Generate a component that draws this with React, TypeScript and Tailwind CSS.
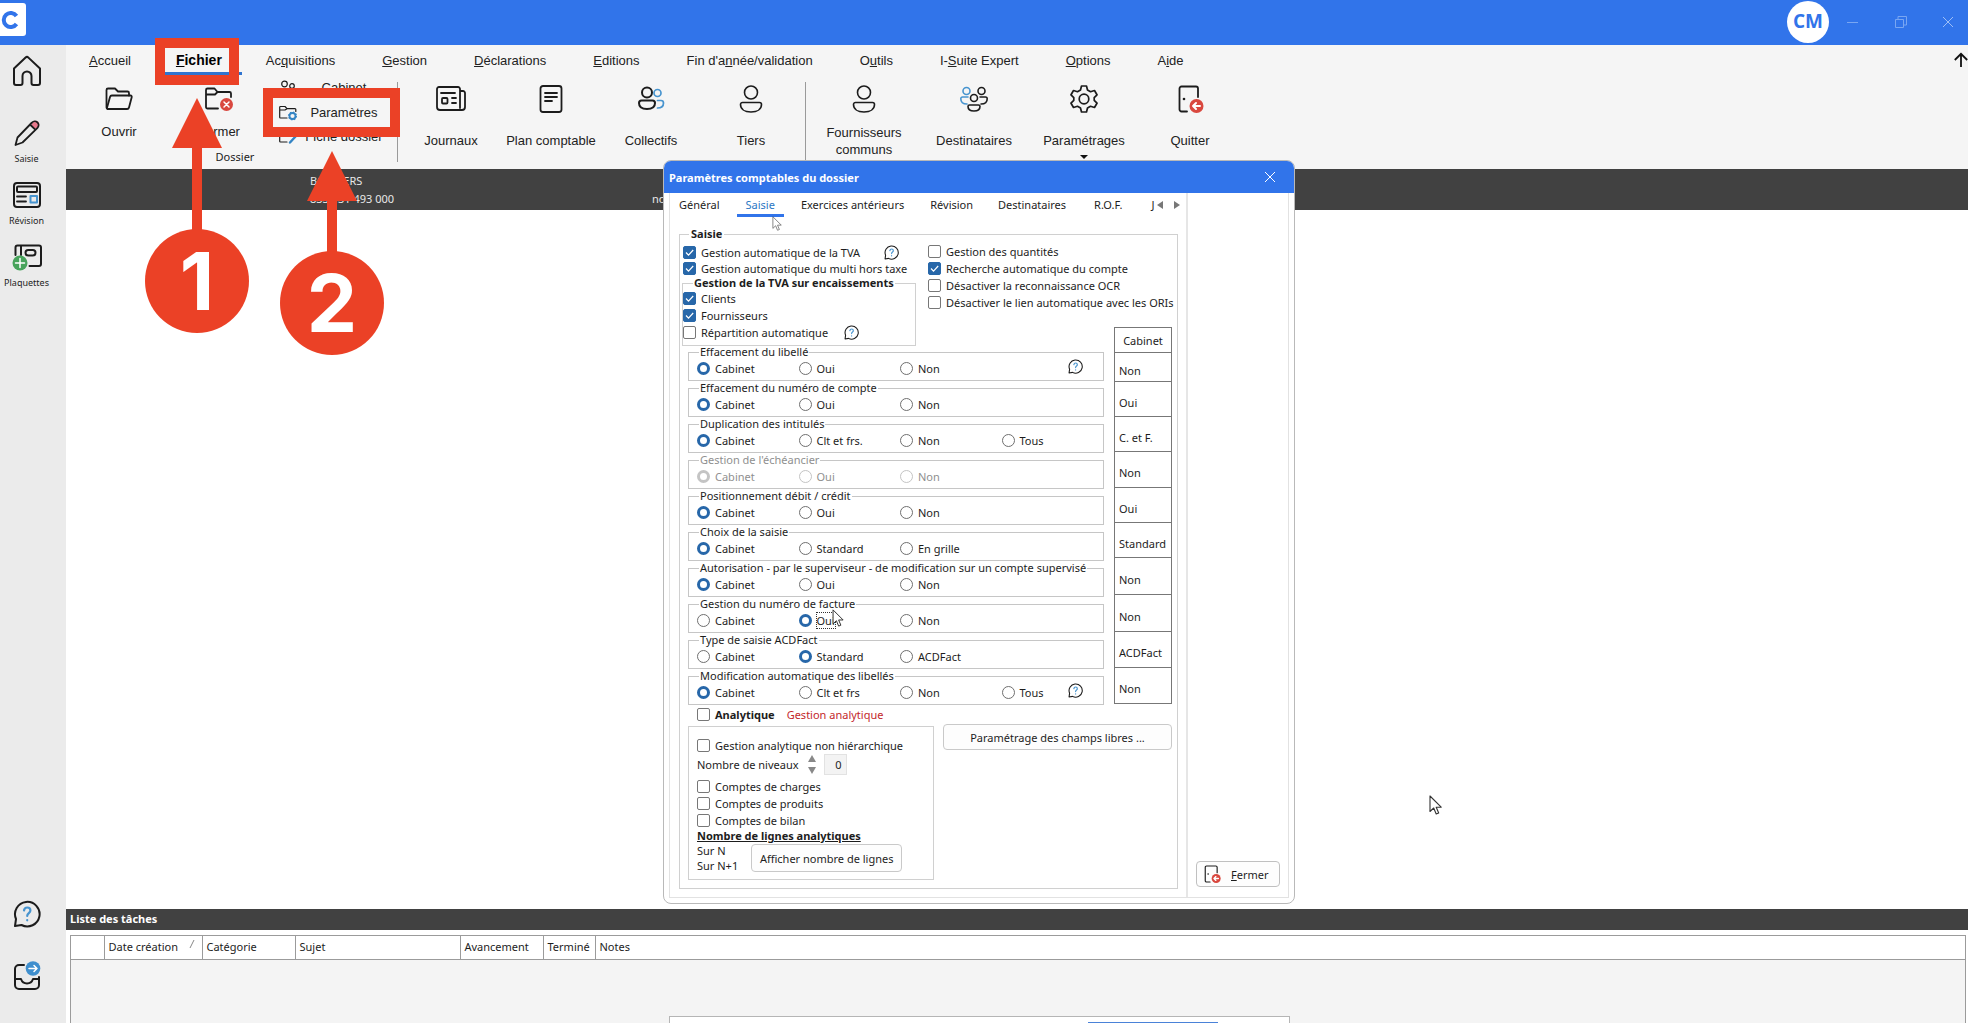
import type { ReactNode } from 'react';

const svgBase = {
  fill: 'none',
  stroke: '#1c1c1c',
  strokeWidth: 2,
  strokeLinecap: 'round' as const,
  strokeLinejoin: 'round' as const,
};

function HomeIcon() {
  return (
    <svg {...svgBase} className="h-8 w-8" viewBox="0 0 32 32">
      <path d="M3 13.500 14.600 2.600a2 2 0 0 1 2.800 0L29 13.500V28a2 2 0 0 1-2 2h-4.500a2 2 0 0 1-2-2v-7a4.500 4.500 0 0 0-9 0v7a2 2 0 0 1-2 2H5a2 2 0 0 1-2-2z" />
    </svg>
  );
}

function PencilIcon() {
  return (
    <svg {...svgBase} className="h-7 w-7" viewBox="0 0 28 28">
      <circle cx="22.500" cy="5.500" r="3.800" fill="#e8798c" stroke="none" />
      <path d="M19 3.500a3.800 3.800 0 0 1 5.500 5.300L9.500 23.500 2.500 26l2-7.500zM17 5.500l5.500 5.300" strokeWidth={1.800} />
    </svg>
  );
}

function RevisionIcon() {
  return (
    <svg {...svgBase} className="h-7 w-7" viewBox="0 0 28 28">
      <rect x="1" y="2" width="26" height="24" rx="3" />
      <rect x="4" y="5.500" width="20" height="5.500" rx="1" />
      <path d="M4 15.500h9M4 20.500h9" strokeWidth={1.800} />
      <rect x="17.500" y="15" width="6.500" height="6.500" stroke="#4794cf" />
    </svg>
  );
}

function PlaquettesIcon() {
  return (
    <svg {...svgBase} className="h-7 w-8" viewBox="0 0 32 28">
      <path d="M4.500 12V4.500a2 2 0 0 1 2-2H28a2 2 0 0 1 2 2V21a2 2 0 0 1-2 2H18.500M10 3v9" />
      <rect x="14.500" y="7" width="10" height="5.500" rx="2.700" />
      <circle cx="9" cy="20" r="7.500" fill="#47a35b" stroke="none" />
      <path d="M9 15.500v9M4.500 20h9" stroke="#fff" strokeWidth={1.500} />
    </svg>
  );
}

function HelpBubble({ className }: { className: string }) {
  return (
    <svg {...svgBase} className={className} viewBox="0 0 28 28">
      <path d="M2 26 3 19A12.300 12.300 0 1 1 8.500 25z" />
      <path d="M11 10.500c.3-2 1.500-3 3.200-3 2 0 3.200 1.200 3.200 3 0 2.500-3.200 2.800-3.200 5.500M14.200 20v.300" stroke="#4794cf" strokeWidth={2.200} />
    </svg>
  );
}

function InboxIcon() {
  return (
    <svg {...svgBase} className="h-[30px] w-7" viewBox="0 0 28 30">
      <path d="M11 4H6a4 4 0 0 0-4 4v16a4 4 0 0 0 4 4h16a4 4 0 0 0 4-4v-8" />
      <path d="M2 18h6c1 3 2.800 4.500 6 4.500s5-1.500 6-4.500h6" />
      <circle cx="20" cy="7.500" r="7.300" fill="#3f8fce" stroke="none" />
      <path d="M16 7.500h8M21 4.500l3 3-3 3" stroke="#fff" strokeWidth={1.500} />
    </svg>
  );
}

function FolderOpenIcon() {
  return (
    <svg {...svgBase} strokeWidth={1.800} className="h-7 w-7" viewBox="0 0 28 28">
      <path d="M1.500 22.500V5a1.500 1.500 0 0 1 1.500-1.500h7l3 3h9.500A1.500 1.500 0 0 1 24 8v2.500" />
      <path d="M1.800 23.500 5 12a2 2 0 0 1 2-1.500h18.500a1.300 1.300 0 0 1 1.200 1.700L24 22.500a2 2 0 0 1-2 1.500H2.500z" />
    </svg>
  );
}

function FolderCloseIcon() {
  return (
    <svg {...svgBase} strokeWidth={1.800} className="h-7 w-7" viewBox="0 0 28 28">
      <path d="M13 23.500H2.500a1.500 1.500 0 0 1-1.500-1.500V5a1.500 1.500 0 0 1 1.500-1.500h7l3 3.500h12a1.500 1.500 0 0 1 1.500 1.500V12M1 9.500h9l2.500-2.500" />
      <circle cx="21.500" cy="19.500" r="6.500" fill="#d9483f" stroke="none" />
      <path d="m19 17 5 5m0-5-5 5" stroke="#fff" strokeWidth={1.500} />
    </svg>
  );
}

function JournalIcon() {
  return (
    <svg {...svgBase} strokeWidth={1.800} className="h-7 w-[30px]" viewBox="0 0 30 28">
      <path d="M24 23V4a2 2 0 0 0-2-2H3a2 2 0 0 0-2 2v18a3 3 0 0 0 3 3h22a3 3 0 0 0 3-3V8a2 2 0 0 0-2-2h-2.500" />
      <path d="M5 8h14M16 13h4M16 18h4" />
      <rect x="6" y="13" width="5.500" height="5.500" rx="1" />
    </svg>
  );
}

function PlanIcon() {
  return (
    <svg {...svgBase} strokeWidth={1.800} className="h-7 w-7" viewBox="0 0 28 28">
      <rect x="3.500" y="1" width="21" height="26" rx="2.500" />
      <path d="M8 8h12M8 12h12M8 16h7" />
    </svg>
  );
}

function CollectifsIcon() {
  return (
    <svg {...svgBase} className="h-7 w-7" viewBox="0 0 28 28">
      <circle cx="10" cy="7.500" r="5" />
      <path d="M4.500 15.500h11a2.500 2.500 0 0 1 2.500 2.500c0 4-3 6-8 6s-8-2-8-6a2.500 2.500 0 0 1 2.500-2.500z" />
      <g stroke="#4794cf" strokeWidth={1.700}>
        <circle cx="20.500" cy="8" r="3.500" />
        <path d="M20.500 15.500H24a2.500 2.500 0 0 1 2.500 2.500c0 3-2 5-6 5" />
      </g>
    </svg>
  );
}

function PersonIcon() {
  return (
    <svg {...svgBase} strokeWidth={1.600} className="h-7 w-7" viewBox="0 0 28 28">
      <circle cx="14" cy="7.500" r="6.500" />
      <path d="M5.500 17.500h17a2 2 0 0 1 2 2c0 4.500-4 7.500-10.500 7.500S3.500 24 3.500 19.500a2 2 0 0 1 2-2z" />
    </svg>
  );
}

function DestinatairesIcon() {
  return (
    <svg {...svgBase} strokeWidth={1.600} className="h-7 w-7" viewBox="0 0 28 28">
      <g stroke="#4794cf">
        <circle cx="6.500" cy="6" r="3.500" />
        <path d="M8 12H2.500A1.700 1.700 0 0 0 .8 13.700c0 3 1.700 5.300 6.200 5.300" />
      </g>
      <circle cx="21.500" cy="6" r="3.500" />
      <path d="M20 12h5.500a1.700 1.700 0 0 1 1.700 1.700c0 3-1.700 5.300-6.200 5.300" />
      <circle cx="14" cy="13" r="3.500" />
      <path d="M9.500 20h9a1.500 1.500 0 0 1 1.500 1.500c0 3-2 4.500-6 4.500s-6-1.500-6-4.500A1.500 1.500 0 0 1 9.500 20z" />
    </svg>
  );
}

function GearIcon() {
  return (
    <svg {...svgBase} strokeWidth={1.700} className="h-7 w-7" viewBox="0 0 28 28">
      <path d="M11.500 1h5l1 4 3 1.700 4-1.200L27 9.800l-2.800 2.900v2.600l2.800 2.900-2.500 4.300-4-1.200-3 1.700-1 4h-5l-1-4-3-1.700-4 1.200L1 18.200l2.800-2.900v-2.600L1 9.800l2.500-4.300 4 1.200 3-1.700z" />
      <circle cx="14" cy="14" r="4.800" />
    </svg>
  );
}

function DoorIcon({ className }: { className: string }) {
  return (
    <svg {...svgBase} strokeWidth={1.800} className={className} viewBox="0 0 28 28">
      <path d="M11 26.500H5.500a2 2 0 0 1-2-2v-21a2 2 0 0 1 2-2H20a2 2 0 0 1 2 2V12" />
      <circle cx="8" cy="14" r="1.300" fill="#1c1c1c" stroke="none" />
      <circle cx="20.500" cy="21" r="7" fill="#d9483f" stroke="none" />
      <path d="M24 21h-7m3-3-3 3 3 3" stroke="#fff" strokeWidth={2} />
    </svg>
  );
}

function CabinetIcon() {
  return (
    <svg {...svgBase} strokeWidth={1.200} className="h-4 w-[18px]" viewBox="0 0 18 16">
      <circle cx="5.500" cy="4" r="2.800" />
      <circle cx="13" cy="6" r="2.300" />
      <path d="M1 14c0-4 10-4 10 0M13 12c2 0 3 .5 4 2" />
    </svg>
  );
}

function FolderGearIcon() {
  return (
    <svg {...svgBase} strokeWidth={1.200} className="h-4 w-[18px]" viewBox="0 0 18 16">
      <path d="M8 13H1.500a.8.8 0 0 1-.8-.8V2.300a.8.8 0 0 1 .8-.8H6l2 2.200h8a.8.8 0 0 1 .8.800v2M.7 5H6l2-1.300" />
      <circle cx="13.500" cy="11" r="3" stroke="#3384c4" strokeWidth={1.800} />
      <circle cx="13.500" cy="11" r="3.900" stroke="#3384c4" strokeWidth={1.200} strokeDasharray="1.500 1.560" strokeLinecap="butt" />
    </svg>
  );
}

function FolderPenIcon() {
  return (
    <svg {...svgBase} strokeWidth={1.200} className="h-4 w-[18px]" viewBox="0 0 18 16">
      <path d="M8 13H1.500a.8.8 0 0 1-.8-.8V2.300a.8.8 0 0 1 .8-.8H6l2 2.200h8a.8.8 0 0 1 .8.800v1M.7 5H6l2-1.300" />
      <path d="m11 13.500 5.500-6" stroke="#3384c4" strokeWidth={2.400} />
    </svg>
  );
}

function PointerIcon({ className }: { className: string }) {
  return (
    <svg className={className} viewBox="0 0 13 20" fill="#fff" stroke="#333" strokeWidth={1.100} strokeLinejoin="round">
      <path d="M1 1v15.500l3.700-3.500 2.500 6 2.500-1-2.500-5.800h5z" />
    </svg>
  );
}

function SideButton({ icon, label }: { icon: ReactNode; label?: string }) {
  return (
    <button className="flex h-[62px] w-full flex-col items-center pr-[13px]" aria-label={label ?? 'Navigation'}>
      <span className="flex h-9 items-center justify-center">{icon}</span>
      {label && <span className="h-4 text-[9px] leading-4">{label}</span>}
    </button>
  );
}

const menuItems: [string, string, string][] = [
  ['', 'A', 'ccueil'],
  ['', 'F', 'ichier'],
  ['Ac', 'q', 'uisitions'],
  ['', 'G', 'estion'],
  ['', 'D', 'éclarations'],
  ['', 'E', 'ditions'],
  ["Fin d'a", 'n', 'née/validation'],
  ['O', 'u', 'tils'],
  ['I-', 'S', 'uite Expert'],
  ['', 'O', 'ptions'],
  ['A', 'i', 'de'],
];

function RibbonButton({ icon, label, width, menu }: { icon: ReactNode; label: string; width: string; menu?: boolean }) {
  return (
    <button className={`flex flex-col items-center pt-[10px] ${width}`}>
      <span className="flex h-7 items-center">{icon}</span>
      <span className="mt-[10px] flex h-[35px] items-center leading-[17px]">{label}</span>
      {menu && (
        <svg className="-mt-[3px] h-1 w-2" viewBox="0 0 8 4">
          <path d="M0 0h8L4 4z" fill="#111" />
        </svg>
      )}
    </button>
  );
}

function Separator() {
  return <div className="mt-[7px] h-20 w-px shrink-0 bg-[#9a9a9a]" />;
}

type CheckBoxProps = { label: string; checked?: boolean; bold?: boolean; tight?: boolean; children?: ReactNode };

function CheckBox({ label, checked, bold, tight, children }: CheckBoxProps) {
  return (
    <div className={`flex items-center ${tight ? 'h-4' : 'h-[17px]'}`}>
      <label className="flex items-center gap-[5px] whitespace-nowrap">
        <span className="relative flex h-[13px] w-[13px]">
          <input
            type="checkbox"
            defaultChecked={checked}
            className="peer h-[13px] w-[13px] appearance-none rounded-[2px] border border-[#777] bg-white checked:border-[#2767a9] checked:bg-[#2767a9]"
          />
          <svg className="pointer-events-none absolute inset-0 hidden peer-checked:block" viewBox="0 0 13 13" fill="none" stroke="#fff" strokeWidth={1.200}>
            <path d="m3 6.500 2.500 2.700L10.200 4" />
          </svg>
        </span>
        <span className={bold ? 'font-bold' : ''}>{label}</span>
      </label>
      {children}
    </div>
  );
}

type Group = { title: string; options: string[]; selected: number; disabled?: boolean; help?: boolean; focus?: boolean };

const groups: Group[] = [
  { title: 'Effacement du libellé', options: ['Cabinet', 'Oui', 'Non'], selected: 0, help: true },
  { title: 'Effacement du numéro de compte', options: ['Cabinet', 'Oui', 'Non'], selected: 0 },
  { title: 'Duplication des intitulés', options: ['Cabinet', 'Clt et frs.', 'Non', 'Tous'], selected: 0 },
  { title: "Gestion de l'échéancier", options: ['Cabinet', 'Oui', 'Non'], selected: 0, disabled: true },
  { title: 'Positionnement débit / crédit', options: ['Cabinet', 'Oui', 'Non'], selected: 0 },
  { title: 'Choix de la saisie', options: ['Cabinet', 'Standard', 'En grille'], selected: 0 },
  { title: 'Autorisation - par le superviseur - de modification sur un compte supervisé', options: ['Cabinet', 'Oui', 'Non'], selected: 0 },
  { title: 'Gestion du numéro de facture', options: ['Cabinet', 'Oui', 'Non'], selected: 1, focus: true },
  { title: 'Type de saisie ACDFact', options: ['Cabinet', 'Standard', 'ACDFact'], selected: 1 },
  { title: 'Modification automatique des libellés', options: ['Cabinet', 'Clt et frs', 'Non', 'Tous'], selected: 0, help: true },
];

function RadioGroup({ group }: { group: Group }) {
  return (
    <fieldset disabled={group.disabled} className={`h-9 border border-[#c6c6c6] pl-2 ${group.disabled ? 'text-[#8f8f8f]' : ''}`}>
      <legend className="ml-[2px] px-px leading-[14px]">{group.title}</legend>
      <div className="relative grid h-[19px] grid-cols-4 items-center">
        {group.options.map((option, i) => (
          <label key={option} className="flex items-center gap-[5px] whitespace-nowrap">
            <input
              type="radio"
              name={group.title}
              defaultChecked={i === group.selected}
              className="h-[13px] w-[13px] appearance-none rounded-full border border-[#6f6f6f] bg-white checked:border-[3px] checked:border-[#2767a9] disabled:border-[#c4c4c4]"
            />
            <span className={group.focus && i === group.selected ? 'relative outline-1 outline-dotted outline-[#333]' : ''}>
              {option}
              {group.focus && i === group.selected && <PointerIcon className="absolute -top-1 left-[15px] h-[18px] w-3" />}
            </span>
          </label>
        ))}
        {group.help && <HelpBubble className="absolute right-5 top-0 h-[15px] w-[15px]" />}
      </div>
    </fieldset>
  );
}

const cabinetRows: [string, string][] = [
  ['Non', 'h-[29px]'],
  ['Oui', 'h-[35px]'],
  ['C. et F.', 'h-[35px]'],
  ['Non', 'h-[36px]'],
  ['Oui', 'h-[35px]'],
  ['Standard', 'h-[35px]'],
  ['Non', 'h-[37px]'],
  ['Non', 'h-[37px]'],
  ['ACDFact', 'h-[36px]'],
  ['Non', 'h-[36px]'],
];

const dialogTabs: [string, string][] = [
  ['Général', 'pr-[10px]'],
  ['Saisie', 'px-[9px]'],
  ['Exercices antérieurs', 'px-[10px]'],
  ['Révision', 'px-[9px]'],
  ['Destinataires', 'px-[9px]'],
  ['R.O.F.', 'px-[12px]'],
  ['J', 'pl-[10px]'],
];

function ParametersDialog() {
  return (
    <section
      role="dialog"
      aria-label="Paramètres comptables du dossier"
      className="absolute left-[663px] top-[160px] w-[632px] overflow-hidden rounded-lg border border-[#b9b9b9] bg-white text-[11px] leading-[15px] text-[#1d1d1d]"
    >
      <header className="flex h-8 items-center justify-between bg-[#3174ea] pl-[5px] pr-[18px] text-white">
        <h2 className="font-bold">Paramètres comptables du dossier</h2>
        <button aria-label="Fermer la fenêtre">
          <svg className="h-3 w-3" viewBox="0 0 12 12" stroke="#fff">
            <path d="m1 1 10 10M11 1 1 11" />
          </svg>
        </button>
      </header>
      <div className="mx-[5px] mb-[5px] flex border-x border-b border-[#e2e2e2]">
        <div className="w-[518px] border-r-2 border-[#e6e6e6] pb-2 pl-[9px] pr-2">
          <div className="flex h-[34px] items-start pt-[2px]">
            <div role="tablist" className="flex flex-1 gap-[7px]">
              {dialogTabs.map(([tab, padding], i) => (
                <button
                  key={tab}
                  role="tab"
                  className={`h-[22px] border-b-[3px] ${padding} ${i === 1 ? 'border-[#3174ea] text-[#2c77c4]' : 'border-transparent'}`}
                >
                  {tab}
                </button>
              ))}
            </div>
            <div className="-mr-[2px] flex gap-[11px] pt-[6px]">
              <button aria-label="Onglets précédents">
                <svg className="h-2 w-1.5" viewBox="0 0 6 8"><path d="M6 0v8L0 4z" fill="#777" /></svg>
              </button>
              <button aria-label="Onglets suivants">
                <svg className="h-2 w-1.5" viewBox="0 0 6 8"><path d="M0 0v8l6-4z" fill="#777" /></svg>
              </button>
            </div>
          </div>
          <fieldset className="border border-[#d0d0d0] pb-2 pl-[2px]">
            <legend className="ml-[7px] px-[2px] font-bold leading-[14px]">Saisie</legend>
            <div className="grid grid-cols-[246px_182px_1fr] grid-rows-[86px_18px_auto]">
              <div className="row-span-2 pl-px pt-[3px]">
                <CheckBox label="Gestion automatique de la TVA" checked tight>
                  <HelpBubble className="ml-6 h-[15px] w-[15px]" />
                </CheckBox>
                <CheckBox label="Gestion automatique du multi hors taxe" checked tight />
                <fieldset className="-ml-px w-[234px] border border-[#d0d0d0] pb-1">
                  <legend className="ml-[10px] px-px font-bold leading-[14px]">Gestion de la TVA sur encaissements</legend>
                  <CheckBox label="Clients" checked />
                  <CheckBox label="Fournisseurs" checked />
                  <CheckBox label="Répartition automatique">
                    <HelpBubble className="ml-4 h-[15px] w-[15px]" />
                  </CheckBox>
                </fieldset>
              </div>
              <div className="col-span-2 pt-[2px]">
                <CheckBox label="Gestion des quantités" />
                <CheckBox label="Recherche automatique du compte" checked />
                <CheckBox label="Désactiver la reconnaissance OCR" />
                <CheckBox label="Désactiver le lien automatique avec les ORIs" />
              </div>
              <div className="col-span-2 col-start-1 row-start-3 px-[6px]">
                {groups.map((group) => (
                  <RadioGroup key={group.title} group={group} />
                ))}
              </div>
              <table className="col-start-3 row-span-2 row-start-2 ml-1 w-[58px] border-collapse self-start">
                <thead>
                  <tr className="h-[25px]">
                    <th scope="col" className="border border-[#777] font-normal">Cabinet</th>
                  </tr>
                </thead>
                <tbody>
                  {cabinetRows.map(([value, height], i) => (
                    <tr key={i} className={height}>
                      <td className="border border-[#777] pl-1 pt-[6px]">{value}</td>
                    </tr>
                  ))}
                </tbody>
              </table>
            </div>
            <div className="flex h-[19px] items-center gap-3 pl-[15px]">
              <CheckBox label="Analytique" bold />
              <span className="text-[#c3272b]">Gestion analytique</span>
            </div>
            <div className="flex items-start gap-[9px] pl-[6px] pr-[5px]">
              <div className="mt-[2px] w-[246px] border border-[#d0d0d0] pb-[6px] pl-2 pt-[10px]">
                <CheckBox label="Gestion analytique non hiérarchique" />
                <div className="mb-1 flex h-5 items-center">
                  <label htmlFor="levels">Nombre de niveaux</label>
                  <span className="ml-[9px] flex flex-col gap-[5px]">
                    <button aria-label="Augmenter"><svg className="h-[7px] w-2" viewBox="0 0 8 7"><path d="M0 7h8L4 0z" fill="#888" /></svg></button>
                    <button aria-label="Diminuer"><svg className="h-[7px] w-2" viewBox="0 0 8 7"><path d="M0 0h8L4 7z" fill="#888" /></svg></button>
                  </span>
                  <input id="levels" defaultValue="0" className="ml-2 h-[21px] w-[23px] border border-[#e2e2e2] bg-[#f3f3f3] pr-1 text-right" />
                </div>
                <CheckBox label="Comptes de charges" />
                <CheckBox label="Comptes de produits" />
                <CheckBox label="Comptes de bilan" />
                <p className="font-bold leading-[14px] underline">Nombre de lignes analytiques</p>
                <div className="flex items-center gap-[13px]">
                  <div>
                    <p>Sur N</p>
                    <p>Sur N+1</p>
                  </div>
                  <button className="h-7 w-[151px] rounded border border-[#c9c9c9] bg-[#fdfdfd]">Afficher nombre de lignes</button>
                </div>
              </div>
              <button className="h-[26px] flex-1 rounded border border-[#c9c9c9] bg-[#fdfdfd]">Paramétrage des champs libres ...</button>
            </div>
          </fieldset>
        </div>
        <div className="flex flex-1 flex-col items-end justify-end pb-[10px] pr-2">
          <button className="flex h-[26px] w-[84px] items-center gap-[10px] rounded border border-[#c0c0c0] bg-[#fdfdfd] pl-[6px]">
            <DoorIcon className="h-[18px] w-[18px]" />
            <span><u>F</u>ermer</span>
          </button>
        </div>
      </div>
    </section>
  );
}

const taskColumns: [string, string][] = [
  ['', 'w-[33px]'],
  ['Date création', 'w-[98px]'],
  ['Catégorie', 'w-[93px]'],
  ['Sujet', 'w-[165px]'],
  ['Avancement', 'w-[83px]'],
  ['Terminé', 'w-[52px]'],
  ['Notes', ''],
];

function TaskPanel() {
  return (
    <section className="flex h-[114px] flex-col text-[11px] text-[#1d1d1d]">
      <h2 className="flex h-[21px] items-center bg-[#414141] pl-[4px] font-bold text-white">Liste des tâches</h2>
      <div className="ml-1 mr-[2px] mt-[5px] flex-1 border border-b-0 border-[#9b9b9b] bg-[#f4f4f4]">
        <table className="w-full table-fixed">
          <thead>
            <tr className="h-[23px] border-b border-[#9b9b9b] bg-white text-left">
              {taskColumns.map(([label, width], i) => (
                <th key={i} scope="col" className={`font-normal ${width} ${i < 6 ? 'border-r border-[#9b9b9b]' : ''} ${i === 0 ? '' : 'pl-1'}`}>
                  {i === 1 ? (
                    <span className="flex justify-between pr-[7px]">
                      {label}
                      <svg className="h-3 w-1.5" viewBox="0 0 6 12" stroke="#888"><path d="M1 9 5 1" /></svg>
                    </span>
                  ) : (
                    label
                  )}
                </th>
              ))}
            </tr>
          </thead>
        </table>
      </div>
    </section>
  );
}

function Callout({ digit, position, shaft }: { digit: string; position: string; shaft: string }) {
  return (
    <div className={`pointer-events-none absolute flex w-[104px] flex-col items-center ${position}`}>
      <svg className="h-[50px] w-[50px]" viewBox="0 0 50 50">
        <path d="M25 0 50 50H0z" fill="#eb4126" />
      </svg>
      <div className={`-mt-px w-[10px] bg-[#eb4126] ${shaft}`} />
      <div className="-mt-0.5 flex h-[104px] w-[104px] items-center justify-center rounded-full bg-[#eb4126] text-[80px] font-bold leading-none text-white">
        {digit}
      </div>
    </div>
  );
}

export default function App() {
  return (
    <div className="relative flex h-screen flex-col overflow-hidden bg-white font-['Noto_Sans',sans-serif] text-[#1d1d1d]">
      <header className="flex h-[45px] shrink-0 items-start justify-between bg-[#3174ea]">
        <div className="mt-[3px] flex h-[33px] w-[26px] items-center rounded-r-[3px] bg-white">
          <svg className="h-[18px] w-[19px]" viewBox="0 0 19 18" fill="none" stroke="#3174ea" strokeWidth={4}>
            <path d="M16.500 5A7 7 0 1 0 16.500 13" />
          </svg>
        </div>
        <div className="flex h-[43px] items-center">
          <span className="mr-[18px] flex h-[42px] w-[42px] items-center justify-center rounded-full bg-white font-['Open_Sans',sans-serif] text-[19px] font-bold text-[#3174ea]">CM</span>
          <button aria-label="Réduire" className="mr-[36px]"><svg className="h-3 w-3" viewBox="0 0 12 12" stroke="#79a6f2"><path d="M0 6.500h11" /></svg></button>
          <button aria-label="Restaurer" className="mr-[35px]"><svg className="h-3 w-3" viewBox="0 0 12 12" fill="none" stroke="#79a6f2"><path d="M.5 3.500h8v8h-8zM3 3V.5h8.500V9H9" /></svg></button>
          <button aria-label="Fermer" className="mr-[14px]"><svg className="h-3 w-3" viewBox="0 0 12 12" stroke="#9dbef6"><path d="m1 1 10 10M11 1 1 11" /></svg></button>
        </div>
      </header>

      <div className="flex min-h-0 flex-1">
        <aside className="flex w-[66px] shrink-0 flex-col justify-between bg-[#ebebeb] pb-[3px] pt-2">
          <nav>
            <SideButton icon={<HomeIcon />} />
            <SideButton icon={<PencilIcon />} label="Saisie" />
            <SideButton icon={<RevisionIcon />} label="Révision" />
            <SideButton icon={<PlaquettesIcon />} label="Plaquettes" />
          </nav>
          <div>
            <SideButton icon={<HelpBubble className="h-7 w-7" />} />
            <SideButton icon={<InboxIcon />} />
          </div>
        </aside>

        <main className="flex min-w-0 flex-1 flex-col">
          <div className="h-[124px] shrink-0 bg-[#f5f5f5] font-['Liberation_Sans',sans-serif] text-[13px] text-[#222]">
            <div className="flex h-[30px] justify-between pl-[23px]">
              <nav className="flex gap-[47px] whitespace-nowrap">
                {menuItems.map(([before, key, after], i) => (
                  <button key={i} className={i === 1 ? 'relative -ml-[2px] -mr-[3px] text-[14px] font-bold text-black' : 'pt-px'}>
                    {before}
                    <u>{key}</u>
                    {after}
                    {i === 1 && <span className="absolute -left-3 -right-5 bottom-0 h-[3px] bg-[#2f74d0]" />}
                  </button>
                ))}
              </nav>
              <button aria-label="Replier le ruban">
                <svg className="h-4 w-[14px]" viewBox="0 0 14 16" fill="none" stroke="#111" strokeWidth={1.800}>
                  <path d="M7 15V1.500M.8 8 7 1.800 13.200 8" />
                </svg>
              </button>
            </div>
            <div className="flex items-start pl-[3px]">
              <div className="flex w-[328px] flex-col items-center">
                <div className="flex h-[74px] w-full">
                  <button className="flex w-[100px] flex-col items-center pt-[10px]">
                    <FolderOpenIcon />
                    <span className="mt-[10px] leading-[17px]">Ouvrir</span>
                  </button>
                  <button className="flex w-[100px] flex-col items-center pt-[10px]">
                    <FolderCloseIcon />
                    <span className="mt-[10px] leading-[17px]">Fermer</span>
                  </button>
                  <div className="flex w-[118px] flex-col pl-[10px]">
                    <button className="flex h-[25px] items-center"><CabinetIcon /><span className="flex-1 pl-1">Cabinet</span></button>
                    <button className="flex h-[25px] items-center"><FolderGearIcon /><span className="flex-1 pl-1">Paramètres</span></button>
                    <button className="flex h-[24px] items-center"><FolderPenIcon /><span className="flex-1 pl-1">Fiche dossier</span></button>
                  </div>
                </div>
                <span className="pl-1 font-['Noto_Sans',sans-serif] text-[11px] leading-4">Dossier</span>
              </div>
              <Separator />
              <div className="flex pl-[3px] pr-1">
                <RibbonButton width="w-[100px]" icon={<JournalIcon />} label="Journaux" />
                <RibbonButton width="w-[100px]" icon={<PlanIcon />} label="Plan comptable" />
                <RibbonButton width="w-[100px]" icon={<CollectifsIcon />} label="Collectifs" />
                <RibbonButton width="w-[100px]" icon={<PersonIcon />} label="Tiers" />
              </div>
              <Separator />
              <div className="flex pl-[3px]">
                <RibbonButton width="w-[110px]" icon={<PersonIcon />} label="Fournisseurs communs" />
                <RibbonButton width="w-[110px]" icon={<DestinatairesIcon />} label="Destinataires" />
                <RibbonButton width="w-[110px]" icon={<GearIcon />} label="Paramétrages" menu />
                <RibbonButton width="w-[102px]" icon={<DoorIcon className="h-7 w-7" />} label="Quitter" />
              </div>
            </div>
          </div>

          <div className="flex h-[41px] shrink-0 items-center bg-[#414141] pl-[244px] text-[11px] leading-[18px] text-[#e8e8e8]">
            <div className="w-[342px]">
              <p>BOULIERS</p>
              <p>833 431 493 000</p>
            </div>
            <p className="pt-[18px]">no</p>
          </div>

          <div className="flex-1" />
          <TaskPanel />
        </main>
      </div>

      <ParametersDialog />

      <div className="absolute bottom-0 left-[669px] flex h-[7px] w-[621px] items-end border border-b-0 border-[#b5b5b5] bg-white pl-[418px]">
        <div className="h-px w-[130px] bg-[#4a82d8]" />
      </div>

      <PointerIcon className="pointer-events-none absolute left-[772px] top-[216px] h-[15px] w-[10px] opacity-70" />
      <PointerIcon className="pointer-events-none absolute left-[1429px] top-[795px] h-5 w-[13px]" />

      <div className="pointer-events-none absolute left-[155px] top-[38px] h-[47px] w-[84px] border-[10px] border-[#eb4126]" />
      <div className="pointer-events-none absolute left-[263px] top-[88px] h-[49px] w-[137px] border-[10px] border-[#eb4126]" />
      <div className="font-['Inter',sans-serif]">
        <Callout digit="1" position="left-[145px] top-[98px]" shaft="h-[84px]" />
        <Callout digit="2" position="left-[280px] top-[151px]" shaft="h-[53px]" />
      </div>
    </div>
  );
}
